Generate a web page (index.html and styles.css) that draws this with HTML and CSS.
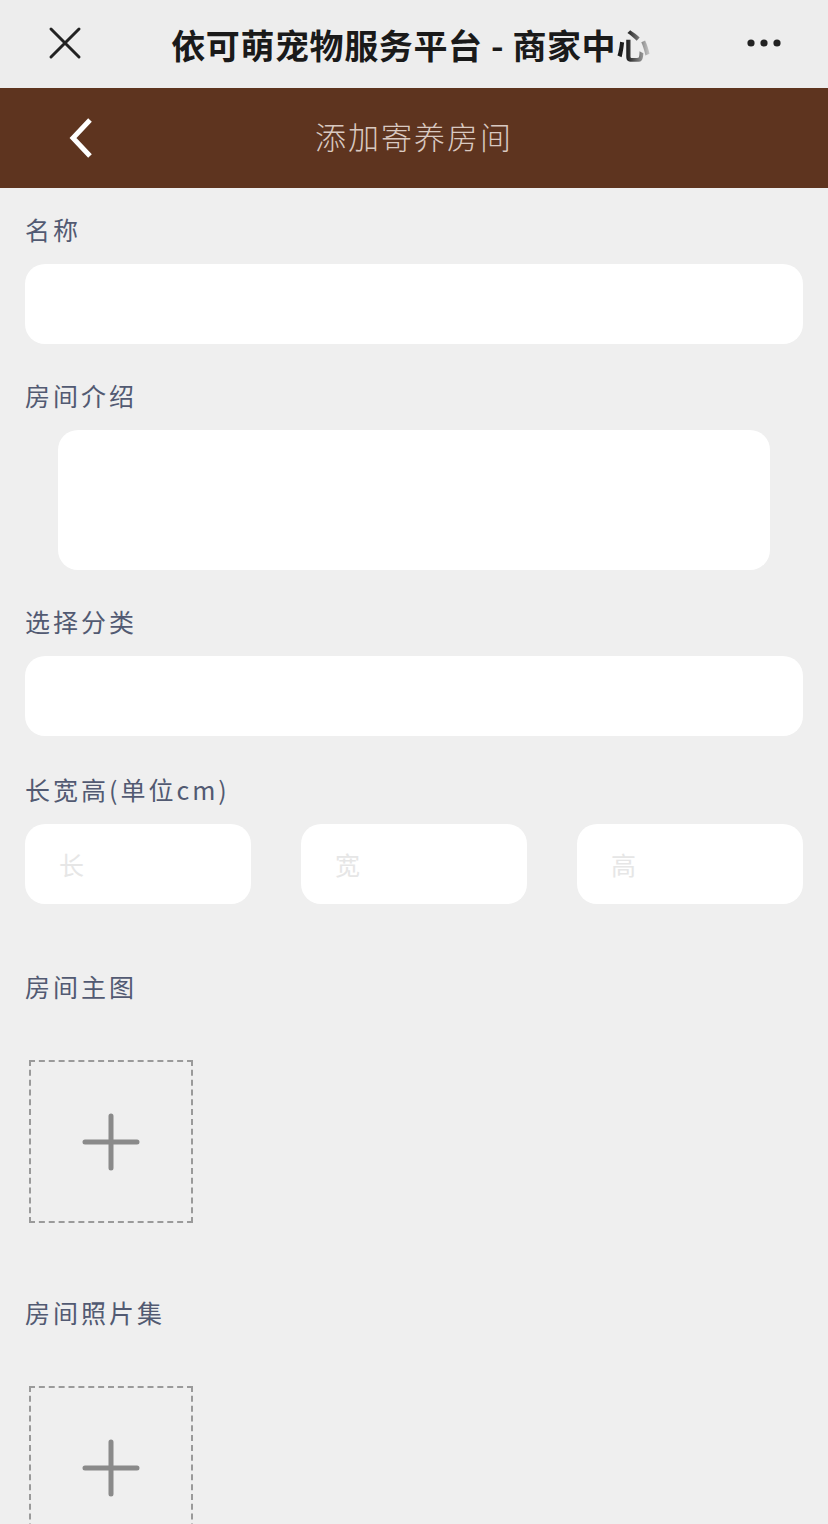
FILE: index.html
```html
<!DOCTYPE html>
<html lang="zh-CN">
<head>
    <meta charset="UTF-8">
    <meta name="viewport" content="width=device-width, initial-scale=1.0">
    <title>添加寄养房间</title>
    <link rel="stylesheet" href="styles.css">
</head>
<body>

    <div class="wx-bar">
        <span class="wx-close">
            <svg width="34" height="34" viewBox="0 0 34 34"><path d="M3 3 L31 31 M31 3 L3 31" stroke="#222" stroke-width="3" stroke-linecap="round" fill="none"/></svg>
        </span>
        <h1 class="wx-title">依可萌宠物服务平台 - 商家中<span class="fade">心</span></h1>
        <span class="wx-more">
            <svg width="36" height="10" viewBox="0 0 36 10"><circle cx="5" cy="5" r="3.6" fill="#222"/><circle cx="18" cy="5" r="3.6" fill="#222"/><circle cx="31" cy="5" r="3.6" fill="#222"/></svg>
        </span>
    </div>

    <div class="header">
        <a class="back" href="#">
            <svg width="30" height="44" viewBox="0 0 30 44"><path d="M23 4 L6 22 L23 40" stroke="#fff" stroke-width="5" fill="none" stroke-linejoin="miter"/></svg>
        </a>
        <h2>添加寄养房间</h2>
    </div>

    <form class="form">
        <div class="field">
            <label>名称</label>
            <input class="input" type="text">
        </div>

        <div class="field">
            <label>房间介绍</label>
            <textarea class="textarea"></textarea>
        </div>

        <div class="field">
            <label>选择分类</label>
            <input class="input" type="text">
        </div>

        <div class="field sizes">
            <label>长宽高(单位cm)</label>
            <div class="size-row">
                <input class="input small" type="text" placeholder="长">
                <input class="input small" type="text" placeholder="宽">
                <input class="input small" type="text" placeholder="高">
            </div>
        </div>

        <div class="field upload-field">
            <label>房间主图</label>
            <div class="upload">
                <svg width="60" height="60" viewBox="0 0 60 60"><path d="M30 4 V56 M4 30 H56" stroke="#8a8a8a" stroke-width="5" stroke-linecap="round" fill="none"/></svg>
            </div>
        </div>

        <div class="field upload-field">
            <label>房间照片集</label>
            <div class="upload">
                <svg width="60" height="60" viewBox="0 0 60 60"><path d="M30 4 V56 M4 30 H56" stroke="#8a8a8a" stroke-width="5" stroke-linecap="round" fill="none"/></svg>
            </div>
        </div>
    </form>

</body>
</html>
```

FILE: styles.css
```css
body {
    margin: 0;
    padding: 0;
    background: #efefef;
    font-family: "Noto Sans CJK SC", "Noto Sans", sans-serif;
}

.wx-bar {
    height: 88px;
    background: #ededed;
    display: flex;
    align-items: center;
    position: relative;
}

.wx-close {
    position: absolute;
    left: 48px;
    top: 26px;
    width: 34px;
    height: 34px;
}

.wx-close svg,
.wx-more svg {
    display: block;
}

.wx-more {
    position: absolute;
    left: 746px;
    top: 38px;
}

.wx-title {
    margin: 0 auto;
    font-size: 34px;
    font-weight: 700;
    color: #1a1a1a;
    letter-spacing: 0.6px;
    transform: translateX(-3px);
}

.wx-title .fade {
    background: linear-gradient(90deg, #1a1a1a 30%, #ededed 110%);
    -webkit-background-clip: text;
    background-clip: text;
    color: transparent;
}

.header {
    height: 100px;
    background: #5e341f;
    display: flex;
    align-items: center;
    justify-content: center;
    position: relative;
}

.back {
    position: absolute;
    left: 67px;
    top: 28px;
}

.back svg {
    display: block;
}

.header h2 {
    margin: 0 0 6px;
    font-size: 31px;
    font-weight: 300;
    color: #d9c9c1;
    letter-spacing: 2px;
}

.form {
    padding: 23px 25px 0;
}

.field {
    margin-bottom: 33px;
}

.field label {
    display: block;
    height: 36px;
    line-height: 36px;
    font-size: 25px;
    color: #525a72;
    letter-spacing: 3px;
    margin-bottom: 17px;
}

.input {
    display: block;
    width: 100%;
    height: 80px;
    box-sizing: border-box;
    border: none;
    border-radius: 20px;
    background: #fff;
    outline: none;
    padding: 0 34px;
    font-size: 25px;
    font-family: inherit;
}

.textarea {
    display: block;
    width: 712px;
    height: 140px;
    margin: 0 auto;
    box-sizing: border-box;
    border: none;
    border-radius: 20px;
    background: #fff;
    resize: none;
    outline: none;
}

.size-row {
    display: flex;
    gap: 50px;
}

.input.small {
    flex: 1;
    width: auto;
    min-width: 0;
}

.input.small::placeholder {
    color: #e6e6e6;
}

.field:nth-child(3) {
    margin-bottom: 35px;
}

.field.sizes {
    margin-bottom: 64px;
}

.upload-field {
    margin-bottom: 71px;
}

.upload-field label {
    margin-bottom: 56px;
}

.upload {
    width: 164px;
    height: 163px;
    box-sizing: border-box;
    margin-left: 4px;
    border: 2px dashed #9a9a9a;
    display: flex;
    align-items: center;
    justify-content: center;
}
```
